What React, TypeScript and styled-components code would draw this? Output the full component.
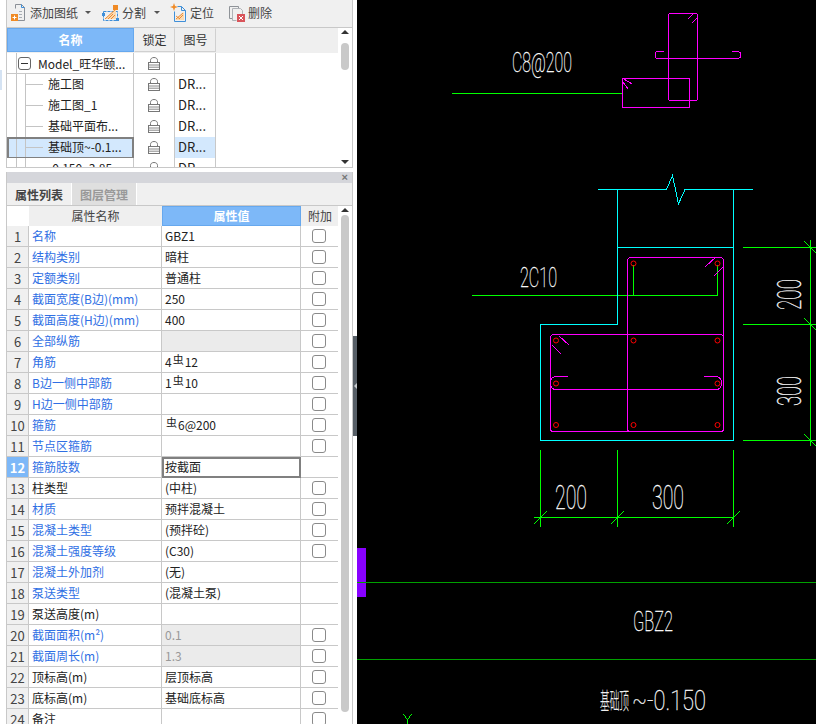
import React from "react";
import styled, { createGlobalStyle } from "styled-components";

const Global = createGlobalStyle`
  html, body { margin: 0; padding: 0; background: #fff; }
  body { font-family: "Noto Sans CJK SC", "Noto Sans", sans-serif; font-size: 12px; color: #222; }
`;

const Page = styled.div`
  display: flex;
  width: 816px;
  height: 724px;
  overflow: hidden;
  background: #fff;
`;

const Sidebar = styled.div`
  position: relative;
  flex: 0 0 347px;
  height: 724px;
  margin-left: 6px;
  display: flex;
  flex-direction: column;
  gap: 4px;
`;

const EdgeMark = styled.div`
  position: absolute;
  left: -6px;
  top: 70px;
  width: 2px;
  height: 20px;
  background: #d5e3f3;
`;

const TreePanel = styled.section`
  flex: 0 0 168px;
  height: 168px;
  min-height: 0;
  overflow: hidden;
  box-sizing: border-box;
  border: 1px solid #c8c8c8;
  border-top: 0;
  display: flex;
  flex-direction: column;
`;

const Toolbar = styled.div`
  flex: 0 0 28px;
  box-sizing: border-box;
  display: flex;
  align-items: center;
  padding: 0 0 2px 3px;
  background: #f0f0f0;
  border-bottom: 1px solid #c8c8c8;
  color: #444;
`;

const ToolButton = styled.div<{ $after: number }>`
  display: flex;
  align-items: center;
  gap: 3px;
  margin-right: ${(p) => p.$after}px;
  line-height: 16px;
`;

const Caret = styled.i<{ $offset: number }>`
  margin-left: ${(p) => p.$offset}px;
  width: 0;
  height: 0;
  border-left: 3px solid transparent;
  border-right: 3px solid transparent;
  border-top: 3px solid #555;
`;

const PanelBody = styled.div`
  flex: 1;
  min-height: 0;
  overflow: hidden;
  display: flex;
`;

const TreeArea = styled.div`
  flex: 0 0 331px;
  overflow: hidden;
`;

const TreeHeader = styled.div`
  display: grid;
  grid-template-columns: 127px 41px 41px 1fr;
  height: 25px;
  background: #efefef;
`;

const TreeHeadCell = styled.div<{ $active?: boolean }>`
  box-sizing: border-box;
  display: flex;
  align-items: center;
  justify-content: center;
  height: 24px;
  padding-bottom: 2px;
  color: ${(p) => (p.$active ? "#fff" : "#333")};
  font-weight: ${(p) => (p.$active ? 700 : 400)};
  background: ${(p) => (p.$active ? "#7db8f8" : "#efefef")};
  border: 1px solid ${(p) => (p.$active ? "#66a8ee" : "#efefef")};
  border-right-color: ${(p) => (p.$active ? "#66a8ee" : "#d0d0d0")};
  border-bottom-color: ${(p) => (p.$active ? "#66a8ee" : "#d0d0d0")};
`;

const TreeRow = styled.div`
  display: grid;
  grid-template-columns: 127px 41px 41px;
  height: 21px;
`;

const TreeName = styled.div<{ $root?: boolean; $selected?: boolean }>`
  box-sizing: border-box;
  display: flex;
  align-items: center;
  gap: 7px;
  padding-left: ${(p) => (p.$root ? 11 : 41)}px;
  padding-bottom: ${(p) => (p.$root ? 0 : 2)}px;
  white-space: nowrap;
  color: #222;
  border-right: 1px solid #c8c8c8;
  border-bottom: 1px solid #c8c8c8;
  background-color: ${(p) => (p.$selected ? "#d3e8fd" : "#fff")};
  background-image: linear-gradient(#c4c4c4, #c4c4c4)
      ${(p) => (p.$root ? "" : ", linear-gradient(#c4c4c4, #c4c4c4), linear-gradient(#c4c4c4, #c4c4c4)")};
  background-repeat: no-repeat;
  background-size: 1px 100% ${(p) => (p.$root ? "" : ", 1px 100%, 18px 1px")};
  background-position: 9px 0 ${(p) => (p.$root ? "" : ", 18px 0, 18px 10px")};
  ${(p) => (p.$selected ? "outline: 2px solid #808080; outline-offset: -2px;" : "")}
`;

const ExpandBox = styled.span`
  box-sizing: border-box;
  flex: 0 0 13px;
  height: 13px;
  border: 1px solid #666;
  border-radius: 3px;
  background: #fff;
  display: flex;
  align-items: center;
  justify-content: center;
  &::before {
    content: "";
    width: 7px;
    height: 1px;
    background: #333;
  }
`;

const TreeCell = styled.div<{ $selected?: boolean; $text?: boolean }>`
  box-sizing: border-box;
  display: flex;
  align-items: center;
  justify-content: ${(p) => (p.$text ? "flex-start" : "center")};
  padding-left: ${(p) => (p.$text ? 3 : 0)}px;
  padding-bottom: ${(p) => (p.$text ? 2 : 0)}px;
  font-size: ${(p) => (p.$text ? 13 : 12)}px;
  border-right: 1px solid #c8c8c8;
  border-bottom: 1px solid #c8c8c8;
  background: ${(p) => (p.$selected ? "#d3e8fd" : "#fff")};
`;

const Track = styled.div`
  flex: 0 0 14px;
  position: relative;
  background: #fff;
`;

const Arrow = styled.i<{ $down?: boolean; $top: number }>`
  position: absolute;
  left: 3px;
  top: ${(p) => p.$top}px;
  width: 0;
  height: 0;
  border-left: 4px solid transparent;
  border-right: 4px solid transparent;
  ${(p) => (p.$down ? "border-top: 4px solid #333;" : "border-bottom: 4px solid #333;")}
`;

const Thumb = styled.i<{ $top: number; $height: number }>`
  position: absolute;
  left: 3px;
  top: ${(p) => p.$top}px;
  width: 8px;
  height: ${(p) => p.$height}px;
  border-radius: 4px;
  background: #c9c9c9;
`;

const PropertyPanel = styled.section`
  flex: 1;
  min-height: 0;
  overflow: hidden;
  box-sizing: border-box;
  border-left: 1px solid #c8c8c8;
  border-right: 1px solid #c8c8c8;
  display: flex;
  flex-direction: column;
`;

const TitleBar = styled.div`
  flex: 0 0 11px;
  background: #d5d6db;
  display: flex;
  justify-content: flex-end;
  align-items: center;
  padding-right: 4px;
  color: #777;
  font: 700 11px/11px "Liberation Sans", sans-serif;
`;

const Tabs = styled.div`
  flex: 0 0 23px;
  box-sizing: border-box;
  display: flex;
  background: #f0f0f0;
  border-bottom: 1px solid #c8c8c8;
`;

const Tab = styled.div<{ $active?: boolean }>`
  box-sizing: border-box;
  width: 65px;
  display: flex;
  align-items: center;
  justify-content: center;
  font-weight: 700;
  color: ${(p) => (p.$active ? "#444" : "#999")};
  background: ${(p) => (p.$active ? "#f0f0f0" : "#dfdfdf")};
  border-right: 1px solid #fff;
`;

const PropArea = styled.div`
  flex: 0 0 331px;
  overflow: hidden;
`;

const PropGrid = styled.div`
  display: grid;
  grid-template-columns: 22px 133px 139px 38px;
  grid-template-rows: 20px;
  grid-auto-rows: 21px;
`;

const PropHead = styled.div<{ $active?: boolean; $blank?: boolean }>`
  box-sizing: border-box;
  height: 20px;
  padding-bottom: 2px;
  display: flex;
  align-items: center;
  justify-content: center;
  color: ${(p) => (p.$active ? "#fff" : "#444")};
  font-weight: ${(p) => (p.$active ? 700 : 400)};
  background: ${(p) => (p.$blank ? "#fff" : p.$active ? "#7db8f8" : "#efefef")};
  border: ${(p) => (p.$active ? "1px solid #66a8ee" : "0")};
`;

const IndexCell = styled.div<{ $current?: boolean }>`
  box-sizing: border-box;
  display: flex;
  align-items: center;
  justify-content: center;
  font-size: 13px;
  font-weight: ${(p) => (p.$current ? 700 : 400)};
  color: ${(p) => (p.$current ? "#fff" : "#444")};
  background: ${(p) => (p.$current ? "#7db8f8" : "#f0f0f0")};
  border-right: 1px solid #c8c8c8;
  border-bottom: 1px solid #c8c8c8;
`;

const NameCell = styled.div<{ $plain?: boolean }>`
  box-sizing: border-box;
  display: flex;
  align-items: center;
  padding: 0 0 2px 3px;
  white-space: nowrap;
  color: ${(p) => (p.$plain ? "#222" : "#2f6fe4")};
  border-right: 1px solid #c8c8c8;
  border-bottom: 1px solid #c8c8c8;
`;

const ValueCell = styled.div<{ $locked?: boolean; $muted?: boolean; $editing?: boolean }>`
  box-sizing: border-box;
  display: flex;
  align-items: center;
  padding: 0 0 2px 3px;
  white-space: nowrap;
  color: ${(p) => (p.$muted ? "#999" : "#222")};
  background: ${(p) => (p.$locked ? "#ebebeb" : "#fff")};
  border-right: 1px solid #c8c8c8;
  border-bottom: 1px solid #c8c8c8;
  ${(p) => (p.$editing ? "border: 0; outline: 2px solid #808080; outline-offset: -2px; height: 21px;" : "")}
`;

const RebarMark = styled.span`
  font-size: 11px;
  line-height: 10px;
  margin: -5px 1px 0 1px;
`;

const AddCell = styled.div`
  box-sizing: border-box;
  display: flex;
  align-items: center;
  justify-content: center;
  padding-right: 2px;
  border-bottom: 1px solid #c8c8c8;
`;

const CheckBox = styled.span`
  box-sizing: border-box;
  width: 14px;
  height: 14px;
  border: 1px solid #8a8a8a;
  border-radius: 3px;
  background: #fff;
`;

const Splitter = styled.div`
  flex: 0 0 4px;
  display: flex;
  align-items: flex-start;
  padding-top: 336px;
`;

const SplitHandle = styled.div`
  width: 4px;
  height: 100px;
  background: #565e66;
  display: flex;
  align-items: center;
  justify-content: flex-end;
  &::before {
    content: "";
    border-top: 3px solid transparent;
    border-bottom: 3px solid transparent;
    border-right: 3px solid #c8ccd0;
  }
`;

const Canvas = styled.div`
  flex: 1;
  background: #000;
  height: 724px;
`;

const Drawing = styled.svg`
  display: block;
  width: 459px;
  height: 724px;
  shape-rendering: crispEdges;
`;

const CadLabel = styled.text`
  fill: #fff;
  stroke: #fff;
  stroke-width: 0.3px;
  font-family: "Roboto", "Liberation Sans", "Noto Sans CJK SC", sans-serif;
  font-weight: 100;
`;

const RebarDot = styled.circle`
  shape-rendering: geometricPrecision;
  fill: none;
  stroke: #ff0000;
`;

const iconStroke = { fill: "none", strokeWidth: 1 } as const;

const AddIcon = () => (
  <svg width="17" height="18" viewBox="0 0 17 18">
    <path d="M5.5 4.5V.5h6l3 3v13h-7" stroke="#8a8f96" {...iconStroke} />
    <path d="M11.5.5v3h3" stroke="#3f8fd8" {...iconStroke} />
    <path d="M9 7.5h3M9 10.5h3M9 13.5h3" stroke="#a8adb3" {...iconStroke} />
    <rect x="1" y="10" width="7" height="7" fill="#f08a24" />
    <path d="M4.5 11.5v4M2.5 13.5h4" stroke="#fff" {...iconStroke} />
  </svg>
);

const SplitIcon = () => (
  <svg width="17" height="18" viewBox="0 0 17 18">
    <path d="M1.5 7.5h14v9h-14z" stroke="#3f8fd8" strokeDasharray="3 1" {...iconStroke} />
    <path d="M3 15 14 5v10z" fill="#fbd9b0" />
    <path d="M3 15 14 5" stroke="#ee8a2e" {...iconStroke} />
    <path d="M6 15l5-5M9 15l4-4" stroke="#ee8a2e" {...iconStroke} />
    <rect x="11" y="1" width="5" height="5" fill="#f08a24" />
    <path d="M0 9h3v3H0zM14 14h3v3h-3z" fill="#3f8fd8" />
  </svg>
);

const LocateIcon = () => (
  <svg width="17" height="20" viewBox="0 0 17 20">
    <path d="M7.5 3.5h4l4 4v11h-11v-10" stroke="#3f8fd8" {...iconStroke} />
    <path d="M11.5 3.5v4h4" stroke="#3f8fd8" {...iconStroke} />
    <path d="M5 17l9-8v8z" fill="#fbd9b0" />
    <path d="M6 16l7-6M9 16l4-4M6 13l4 3" stroke="#ee8a2e" {...iconStroke} />
    <path d="M4 0l1 3 3 1-3 1-1 3-1-3-3-1 3-1z" fill="#f08a24" />
  </svg>
);

const DeleteIcon = () => (
  <svg width="17" height="18" viewBox="0 0 17 18">
    <path d="M4.5 14.5h-3v-12h9v2" stroke="#8f9398" {...iconStroke} />
    <path d="M4.5 4.5h8l2 2v4M4.5 4.5v12h4" stroke="#b0b3b7" {...iconStroke} />
    <rect x="9" y="10" width="8" height="8" fill="#d9545a" />
    <path d="M11 12l4 4M15 12l-4 4" stroke="#fff" {...iconStroke} />
  </svg>
);

const LockIcon = () => (
  <svg width="12" height="13" viewBox="0 0 12 13">
    <path d="M2.5 6V3.5C2.5 1.500 4 .5 6 .5s3.500 1 3.500 3V6" stroke="#777" fill="none" />
    <rect x=".5" y="5.500" width="11" height="7" fill="#fff" stroke="#777" />
    <path d="M1 8h10M1 10.200h10" stroke="#888" />
  </svg>
);

const treeRows = [
  { name: "施工图", num: "DR..." },
  { name: "施工图_1", num: "DR..." },
  { name: "基础平面布...", num: "DR..." },
  { name: "基础顶~-0.1...", num: "DR...", selected: true },
  { name: "-0.150~3.85", num: "DR..." },
];

type Prop = {
  name: string;
  value?: React.ReactNode;
  plain?: boolean;
  locked?: boolean;
  muted?: boolean;
  noCheck?: boolean;
  current?: boolean;
};

const Rebar = () => <RebarMark>虫</RebarMark>;

const props: Prop[] = [
  { name: "名称", value: "GBZ1" },
  { name: "结构类别", value: "暗柱" },
  { name: "定额类别", value: "普通柱" },
  { name: "截面宽度(B边)(mm)", value: "250" },
  { name: "截面高度(H边)(mm)", value: "400" },
  { name: "全部纵筋", locked: true },
  { name: "角筋", value: <>4<Rebar />12</> },
  { name: "B边一侧中部筋", value: <>1<Rebar />10</> },
  { name: "H边一侧中部筋" },
  { name: "箍筋", value: <><Rebar />6@200</> },
  { name: "节点区箍筋" },
  { name: "箍筋肢数", value: "按截面", current: true, noCheck: true },
  { name: "柱类型", value: "(中柱)", plain: true },
  { name: "材质", value: "预拌混凝土" },
  { name: "混凝土类型", value: "(预拌砼)" },
  { name: "混凝土强度等级", value: "(C30)" },
  { name: "混凝土外加剂", value: "(无)", noCheck: true },
  { name: "泵送类型", value: "(混凝土泵)", noCheck: true },
  { name: "泵送高度(m)", plain: true, noCheck: true },
  { name: "截面面积(m²)", value: "0.1", locked: true, muted: true },
  { name: "截面周长(m)", value: "1.3", locked: true, muted: true },
  { name: "顶标高(m)", value: "层顶标高", plain: true },
  { name: "底标高(m)", value: "基础底标高", plain: true },
  { name: "备注", plain: true },
];

const rebarDots: [number, number][] = [
  [633.5, 263.5], [717.5, 263.5], [556, 340.5], [633.5, 340.5], [717.5, 340.5],
  [556, 383.5], [717.5, 383.5], [556, 425], [633.5, 425], [717.5, 425],
];

const Cad = () => (
  <Drawing viewBox="357 0 459 724">
    <rect x="357" y="548" width="9" height="49" fill="#8800ff" />
    <g stroke="#00a000" fill="none">
      <path d="M357 582.500H816M357 659.500H816" />
    </g>
    <g stroke="#00ff00" fill="none">
      <path d="M452 93.500H622" />
      <path d="M472 295.500H717.500V265M633.500 265V295.500" />
      <path d="M743 247.500H816M743 324.500H816M743 440.500H816M810.500 240V446" />
      <path d="M804 241L816 253M804 318L816 330M804 434L816 446" />
      <path d="M540.500 450V527M617.500 450V527M733.500 450V527M534 517.500H733.500" />
      <path d="M534 524L547 511M611 524L624 511M727 524L740 511" />
      <path d="M403.500 714L407.500 720L411.500 714M407.500 720V724" />
    </g>
    <g stroke="#00ffff" fill="none">
      <path d="M598 189.500H666.500L672.500 175.500L678.500 204L685 189.500H752.500" />
      <path d="M617.500 189.500V324.500H540.500V440.500H733.500V189.500M617.500 247.500H733.500" />
    </g>
    <g stroke="#ff00ff" fill="none">
      <rect x="668.500" y="13.500" width="29" height="87" rx="2" />
      <path d="M664 51.500H658Q655 51.500 655 55Q655 58.500 658 58.500H737Q741 58.500 741 55Q741 51.500 737 51.500H732" />
      <rect x="622.500" y="78.500" width="67" height="29" rx="1" />
      <path d="M688 19L693 14M692 23L697 18M624 79L632 84M623 82L628 89" />
      <rect x="627.500" y="257.500" width="96" height="174" rx="3" />
      <rect x="550.500" y="334.500" width="173" height="97" rx="3" />
      <path d="M567.500 376.500H557Q550.500 376.500 550.500 383Q550.500 389.500 556 389.500H716Q721.500 389.500 721.500 383Q721.500 376.500 715 376.500H704" />
      <path d="M705 267L716 257M714 276L723 267M559 336L569 345M552 345L561 354" />
    </g>
    {rebarDots.map(([cx, cy]) => (
      <RebarDot key={`${cx}-${cy}`} cx={cx} cy={cy} r="2.5" />
    ))}
    <CadLabel x="512" y="72" fontSize="27" textLength="60" lengthAdjust="spacingAndGlyphs">C8@200</CadLabel>
    <CadLabel x="520" y="287" fontSize="27" textLength="37" lengthAdjust="spacingAndGlyphs">2C10</CadLabel>
    <CadLabel x="555" y="509" fontSize="33" textLength="32" lengthAdjust="spacingAndGlyphs">200</CadLabel>
    <CadLabel x="652" y="509" fontSize="33" textLength="32" lengthAdjust="spacingAndGlyphs">300</CadLabel>
    <CadLabel transform="translate(801 310) rotate(-90)" fontSize="33" textLength="31" lengthAdjust="spacingAndGlyphs">200</CadLabel>
    <CadLabel transform="translate(801 406) rotate(-90)" fontSize="33" textLength="30" lengthAdjust="spacingAndGlyphs">300</CadLabel>
    <CadLabel x="633" y="631" fontSize="28" textLength="40" lengthAdjust="spacingAndGlyphs">GBZ2</CadLabel>
    <CadLabel>
      <tspan x="600" y="709" fontSize="23" textLength="29" lengthAdjust="spacingAndGlyphs">基础顶</tspan>
      <tspan x="632" y="710" fontSize="28" textLength="74" lengthAdjust="spacingAndGlyphs">~-0.150</tspan>
    </CadLabel>
  </Drawing>
);

export default function App() {
  return (
    <Page>
      <Global />
      <Sidebar>
        <EdgeMark />
        <TreePanel>
          <Toolbar>
            <ToolButton $after={11}><AddIcon /><span>添加图纸</span><Caret $offset={4} /></ToolButton>
            <ToolButton $after={10}><SplitIcon /><span>分割</span><Caret $offset={5} /></ToolButton>
            <ToolButton $after={14}><LocateIcon /><span>定位</span></ToolButton>
            <ToolButton $after={0}><DeleteIcon /><span>删除</span></ToolButton>
          </Toolbar>
          <PanelBody>
            <TreeArea>
              <TreeHeader>
                <TreeHeadCell $active>名称</TreeHeadCell>
                <TreeHeadCell>锁定</TreeHeadCell>
                <TreeHeadCell>图号</TreeHeadCell>
              </TreeHeader>
              <TreeRow>
                <TreeName $root><ExpandBox /><span>Model_旺华颐...</span></TreeName>
                <TreeCell><LockIcon /></TreeCell>
                <TreeCell />
              </TreeRow>
              {treeRows.map((r) => (
                <TreeRow key={r.name}>
                  <TreeName $selected={r.selected}>{r.name}</TreeName>
                  <TreeCell><LockIcon /></TreeCell>
                  <TreeCell $text $selected={r.selected}>{r.num}</TreeCell>
                </TreeRow>
              ))}
            </TreeArea>
            <Track>
              <Arrow $top={2} />
              <Thumb $top={15} $height={27} />
              <Arrow $down $top={132} />
            </Track>
          </PanelBody>
        </TreePanel>
        <PropertyPanel>
          <TitleBar>×</TitleBar>
          <Tabs>
            <Tab $active>属性列表</Tab>
            <Tab>图层管理</Tab>
          </Tabs>
          <PanelBody>
            <PropArea>
              <PropGrid>
                <PropHead $blank />
                <PropHead>属性名称</PropHead>
                <PropHead $active>属性值</PropHead>
                <PropHead>附加</PropHead>
                {props.map((p, i) => (
                  <React.Fragment key={p.name}>
                    <IndexCell $current={p.current}>{i + 1}</IndexCell>
                    <NameCell $plain={p.plain}>{p.name}</NameCell>
                    <ValueCell $locked={p.locked} $muted={p.muted} $editing={p.current}>{p.value}</ValueCell>
                    <AddCell>{p.noCheck ? null : <CheckBox />}</AddCell>
                  </React.Fragment>
                ))}
              </PropGrid>
            </PropArea>
            <Track>
              <Arrow $top={2} />
              <Thumb $top={9} $height={497} />
            </Track>
          </PanelBody>
        </PropertyPanel>
      </Sidebar>
      <Splitter><SplitHandle /></Splitter>
      <Canvas><Cad /></Canvas>
    </Page>
  );
}
